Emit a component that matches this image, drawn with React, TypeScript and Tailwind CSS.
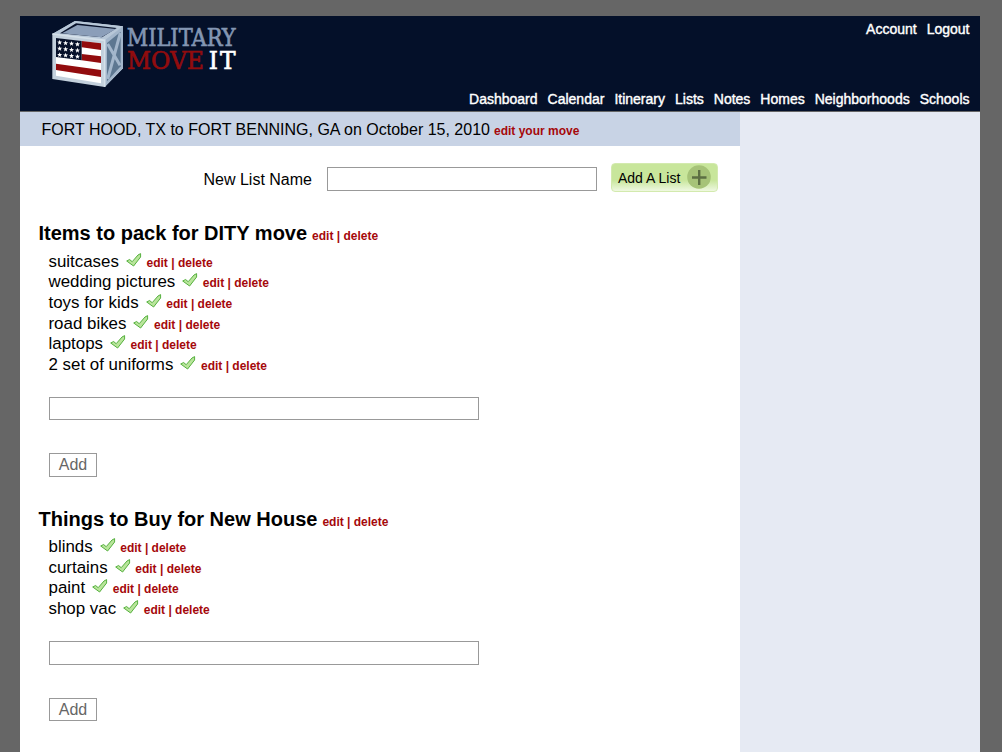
import React from "react";

type TodoList = {
  title: string;
  items: string[];
  headClass: string;
  rowsClass: string;
  inputClass: string;
  addClass: string;
};

const lists: TodoList[] = [
  {
    title: "Items to pack for DITY move",
    items: ["suitcases", "wedding pictures", "toys for kids", "road bikes", "laptops", "2 set of uniforms"],
    headClass: "mt-7",
    rowsClass: "mt-[6.6px]",
    inputClass: "mt-[21.2px] h-[23px]",
    addClass: "h-6",
  },
  {
    title: "Things to Buy for New House",
    items: ["blinds", "curtains", "paint", "shop vac"],
    headClass: "mt-[30px]",
    rowsClass: "mt-[6.2px]",
    inputClass: "mt-[21px] h-6",
    addClass: "h-[23px] pt-px",
  },
];

const nav = ["Dashboard", "Calendar", "Itinerary", "Lists", "Notes", "Homes", "Neighborhoods", "Schools"];

const stars: [number, number][] = [];
for (let r = 0; r < 3; r++) {
  for (let c = 0; c < 4; c++) stars.push([149 + c * 17.8, 112.5 + r * 18.5 + c * 1.8]);
}

function Logo() {
  return (
    <svg width="210" height="72" viewBox="120 42 630 216" className="block shrink-0 overflow-visible">
      <polygon points="127,87 195,48 339,64 339,190 284,246 127,222" fill="#c3d0dc" />
      <polygon points="127,87 195,48 339,64 284,106" fill="#b7c7d8" />
      <polygon points="150,85 198,55 320,69 276,97" fill="#07112a" />
      <polygon points="156,85 202,60 318,72 274,97" fill="#8b9eb9" />
      <polygon points="284,106 339,64 339,190 284,246" fill="#a3b6cb" />
      <polygon points="291,114 332,80 332,184 291,229" fill="#5d7791" />
      <path d="M293 117 L330 181 M331 84 L293 222" stroke="#a3b6cb" strokeWidth="9" />
      <path d="M127 87 L284 106 V246" stroke="#d5e0e9" strokeWidth="5" fill="none" />
      <polygon points="138,100 273,115 273,235 138,212" fill="#fff" />
      <polygon points="215,108 273,115 273,135 215,127" fill="#920c0e" />
      <polygon points="215,147 273,154 273,174 215,166" fill="#920c0e" />
      <polygon points="138,176 273,195 273,216 138,195" fill="#920c0e" />
      <polygon points="138,99 215,108 215,166 138,156" fill="#07112a" />
      {stars.map(([x, y], i) => (
        <polygon
          key={i}
          transform={`translate(${x} ${y})`}
          points="0,-8 2,-2.8 7.6,-2.5 3.2,1 4.7,6.5 0,3.4 -4.7,6.5 -3.2,1 -7.6,-2.5 -2,-2.8"
          fill="#fff"
        />
      ))}
      <g fontFamily="'DejaVu Serif', serif" fontSize="70" strokeWidth="2">
        <text x="350" y="124" textLength="327" lengthAdjust="spacingAndGlyphs" fill="#8396b3" stroke="#8396b3">MILITARY</text>
        <text x="351" y="193" textLength="231" lengthAdjust="spacingAndGlyphs" fill="#920c0e" stroke="#920c0e">MOVE</text>
        <text x="596" y="193" textLength="81" lengthAdjust="spacing" fill="#fff" stroke="#fff">IT</text>
      </g>
    </svg>
  );
}

function Check() {
  return (
    <svg width="16" height="15" viewBox="0 -1 16 15" className="ml-[7px] mr-[4.6px] block shrink-0 self-start">
      <path d="M0.7 8 L3.6 6.5 L6.2 8.7 L12 2 L14.6 0.6 V4 L7.6 13 Z" fill="#b9e59b" stroke="#55b03e" strokeWidth="1" />
    </svg>
  );
}

function Links() {
  return (
    <span className="whitespace-nowrap text-xs font-bold text-[#a5080b]">
      <a href="#">edit</a> | <a href="#">delete</a>
    </span>
  );
}

export default function App() {
  return (
    <div className="h-[752px] w-[1002px] overflow-hidden bg-[#666] px-5 pt-4 pr-[22px] font-['Liberation_Sans',Arial,sans-serif] text-base text-black">
      <header className="flex h-24 justify-between border-b border-[#666] bg-[#041029] pl-[30px] pr-[10.5px] pt-[3px]">
        <Logo />
        <div className="flex flex-col items-end justify-between pb-[2px] text-sm leading-5 text-white [-webkit-text-stroke:0.4px_white]">
          <div className="flex gap-[10px]">
            <a href="#">Account</a>
            <a href="#">Logout</a>
          </div>
          <nav className="flex gap-[10px]">
            {nav.map((n) => (
              <a key={n} href="#">{n}</a>
            ))}
          </nav>
        </div>
      </header>
      <div className="flex h-[640px]">
        <main className="w-[720px] bg-white">
          <div className="flex h-[34px] items-baseline bg-[#c8d3e5] pl-[21.5px] pt-[5.5px] leading-6">
            <span className="whitespace-nowrap">FORT HOOD, TX to FORT BENNING, GA on October 15, 2010</span>
            <a href="#" className="ml-1 text-xs font-bold text-[#a5080b]">edit your move</a>
          </div>
          <div className="mt-4 flex h-[31px] items-start pl-[183.5px]">
            <label htmlFor="list-name" className="w-[123.5px] whitespace-nowrap pt-[6px] leading-6">New List Name</label>
            <input id="list-name" className="mt-[5px] h-6 w-[270px] border border-[#999] bg-white" />
            <button className="ml-[14px] mt-px flex h-[29px] w-[107px] items-center justify-between rounded border border-[#d3eaae] bg-linear-to-b from-[#c8e69b] from-60% to-[#eff8e1] pl-[6px] pr-[6.5px] text-sm">
              <span className="whitespace-nowrap">Add A List</span>
              <svg width="24" height="24" viewBox="0 0 24 24" className="-mt-0.5 block">
                <circle cx="12" cy="12" r="11.8" fill="#a6c378" />
                <path d="M5 12.5h14.5M12.2 5v15" stroke="#5c6f43" strokeWidth="2.4" />
              </svg>
            </button>
          </div>
          {lists.map((l) => (
            <section key={l.title} className={l.headClass}>
              <h2 className="flex h-6 items-baseline gap-[5px] pl-[18.5px] text-xl leading-6 font-bold">
                <span className="whitespace-nowrap">{l.title}</span>
                <Links />
              </h2>
              <ul className={l.rowsClass}>
                {l.items.map((it) => (
                  <li key={it} className="flex h-[20.7px] items-baseline pl-[28.5px] text-[16.9px] leading-[20.7px]">
                    <span className="whitespace-nowrap">{it}</span>
                    <Check />
                    <Links />
                  </li>
                ))}
              </ul>
              <div className="pl-[29px]">
                <input aria-label="New item" className={`block w-[430px] border border-[#999] bg-white ${l.inputClass}`} />
                <button className={`mt-[33px] flex w-12 items-center justify-center border border-[#999] bg-white text-base text-[#666] ${l.addClass}`}>
                  Add
                </button>
              </div>
            </section>
          ))}
        </main>
        <aside className="flex-1 bg-[#e6eaf3]" />
      </div>
    </div>
  );
}
